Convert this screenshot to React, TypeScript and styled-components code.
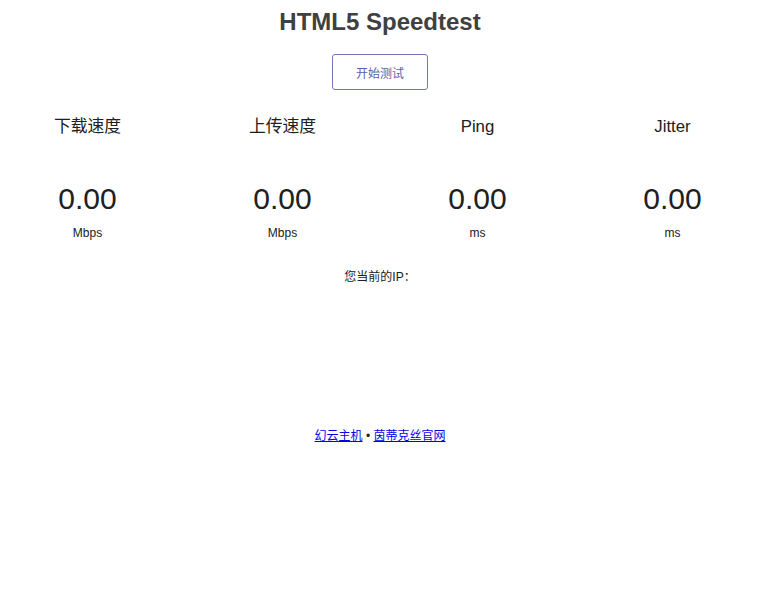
import React from "react"
import styled, { createGlobalStyle } from "styled-components"

const GlobalStyle = createGlobalStyle`
  html, body {
    margin: 0;
    padding: 0;
    background: #ffffff;
    color: #202020;
  }
  body {
    font-family: "Liberation Sans", "Noto Sans CJK SC", sans-serif;
    font-size: 12px;
  }
`

interface Metric {
  name: string
  value: string
  unit: string
}

const metrics: Metric[] = [
  { name: "下载速度", value: "0.00", unit: "Mbps" },
  { name: "上传速度", value: "0.00", unit: "Mbps" },
  { name: "Ping", value: "0.00", unit: "ms" },
  { name: "Jitter", value: "0.00", unit: "ms" },
]

export default function App() {
  return (
    <>
      <GlobalStyle />
      <S.Page>
        <S.Title>HTML5 Speedtest</S.Title>
        <S.StartButton>开始测试</S.StartButton>
        <S.Tests>
          {metrics.map((m) => (
            <S.TestArea key={m.name}>
              <S.TestName>{m.name}</S.TestName>
              <S.MeterText>{m.value}</S.MeterText>
              <S.Unit>{m.unit}</S.Unit>
            </S.TestArea>
          ))}
        </S.Tests>
        <S.IpArea>您当前的IP：</S.IpArea>
        <S.Footer>
          <S.Link href="#">幻云主机</S.Link> • <S.Link href="#">茵蒂克丝官网</S.Link>
        </S.Footer>
      </S.Page>
    </>
  )
}

const S = {
  Page: styled.div`
    width: 760px;
    text-align: center;
  `,
  Title: styled.h1`
    margin: 0;
    padding-top: 8px;
    font-size: 24px;
    line-height: 28px;
    font-weight: 700;
    color: #404040;
  `,
  StartButton: styled.div`
    display: flex;
    align-items: center;
    justify-content: center;
    box-sizing: border-box;
    width: 96px;
    height: 36px;
    margin: 18px auto 0;
    border: 1.5px solid #7474b8;
    border-radius: 3px;
    color: #6060aa;
    font-size: 12px;
    cursor: pointer;
  `,
  Tests: styled.div`
    display: flex;
    margin: 27px -10px 0;
  `,
  TestArea: styled.div`
    flex: 1;
    display: flex;
    flex-direction: column;
    align-items: center;
  `,
  TestName: styled.div`
    font-size: 16.8px;
    line-height: 20px;
    color: #202020;
  `,
  MeterText: styled.div`
    margin-top: 47px;
    font-size: 30px;
    line-height: 30px;
    color: #202020;
  `,
  Unit: styled.div`
    margin-top: 13px;
    font-size: 12px;
    line-height: 12px;
    color: #202020;
  `,
  IpArea: styled.div`
    margin-top: 31px;
    font-size: 12px;
    line-height: 14px;
  `,
  Footer: styled.div`
    margin-top: 145px;
    font-size: 12px;
    line-height: 14px;
  `,
  Link: styled.a`
    color: #0000ee;
    text-decoration: underline;
  `,
}
